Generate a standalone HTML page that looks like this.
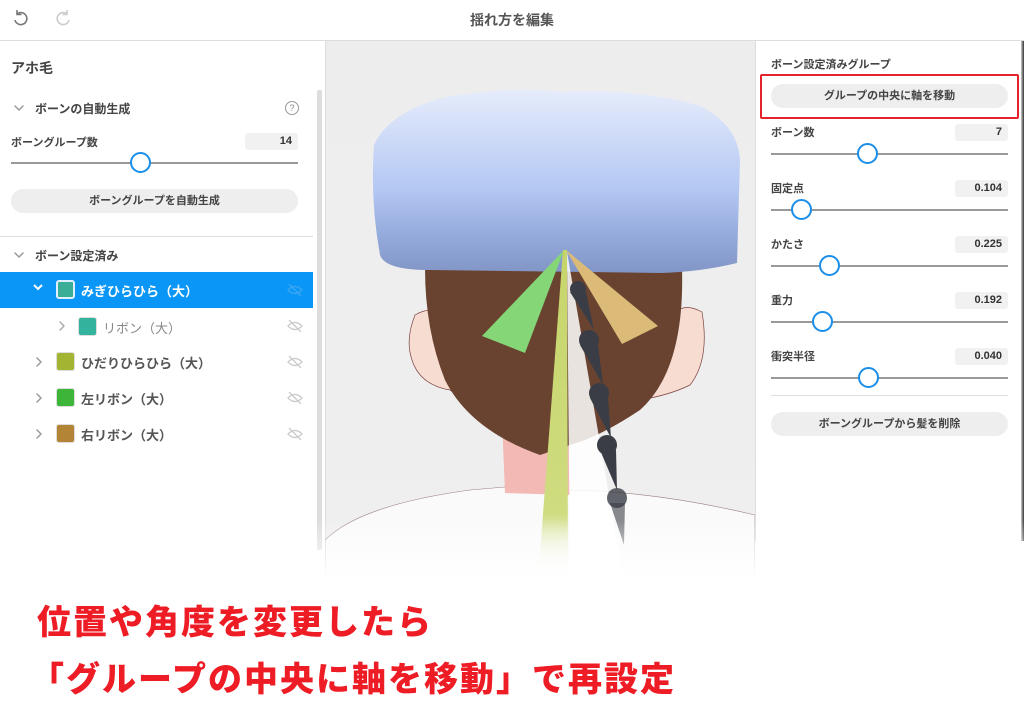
<!DOCTYPE html>
<html><head><meta charset="utf-8"><style>
*{margin:0;padding:0;box-sizing:border-box}
body{width:1024px;height:727px;overflow:hidden;background:#fff;font-family:"Liberation Sans","Noto Sans CJK JP",sans-serif;color:#333;position:relative}
.a{position:absolute}
.t{font-size:11px;font-weight:bold;color:#444;white-space:nowrap}
.val{position:absolute;background:#f1f1f1;border-radius:3px;font-size:11px;font-weight:bold;text-align:right;padding-right:6px;line-height:17px;color:#333}
.line{position:absolute;height:2px;background:#999}
.knob{position:absolute;width:21px;height:21px;border:2px solid #1a8ee8;border-radius:50%;background:#fff}
.btn{position:absolute;background:#eeeeee;border-radius:12px;font-size:11px;font-weight:bold;text-align:center;line-height:24px;color:#444}
.sw{position:absolute;width:19px;height:19px;border-radius:3px;border:1px solid #ddd}
.row{position:absolute;font-size:13px;font-weight:bold;color:#555;white-space:nowrap}
.big{position:absolute;font-size:34px;font-weight:900;color:#ee1c24;white-space:nowrap;letter-spacing:2px;font-family:"Noto Sans CJK JP",sans-serif}
</style></head><body>
<!-- header -->
<svg class="a" style="left:10px;top:8px" width="80" height="22" viewBox="0 0 80 22">
<path d="M7 6 A6 6 0 1 1 5 12" fill="none" stroke="#777" stroke-width="1.6"/><path d="M7 2 L7 6.5 L11.5 6.5" fill="none" stroke="#777" stroke-width="1.6"/>
<path d="M57 6 A6 6 0 1 0 59 12" fill="none" stroke="#ccc" stroke-width="1.6"/><path d="M57 2 L57 6.5 L52.5 6.5" fill="none" stroke="#ccc" stroke-width="1.6"/>
</svg>
<div class="a" style="left:0;width:1024px;top:10px;text-align:center;font-size:14px;font-weight:bold;color:#555">揺れ方を編集</div>
<div class="a" style="left:0;top:40px;width:1024px;height:1px;background:#ddd"></div>

<!-- viewport -->
<div class="a" style="left:325px;top:41px;width:430px;height:540px;background:linear-gradient(#ededed,#efefef)"></div>
<div class="a" style="left:325px;top:41px;width:1px;height:500px;background:#ddd"></div>
<svg class="a" style="left:325px;top:41px" width="430" height="540" viewBox="325 41 430 540">
<defs>
<linearGradient id="hat" x1="0" y1="0" x2="0" y2="1"><stop offset="0" stop-color="#e6ecfb"/><stop offset=".55" stop-color="#b3c7f3"/><stop offset=".8" stop-color="#94aadb"/><stop offset="1" stop-color="#8196c6"/></linearGradient>
<linearGradient id="yel" x1="0" y1="0" x2="0" y2="1"><stop offset="0" stop-color="#c6d56a"/><stop offset=".8" stop-color="#cfdc80"/><stop offset="1" stop-color="#fff" stop-opacity="0"/></linearGradient>
</defs>
<path d="M325 540 Q360 505 470 490 L505 487 L560 490 Q650 490 755 515 L755 580 L325 580Z" fill="#fafafa" stroke="#9a7b80" stroke-width=".6"/>
<path d="M500 370 L505 493 L570 495 L568 390Z" fill="#f2b9b5"/>
<path d="M415 315 Q440 300 465 330 L490 420 Q470 405 450 390 Q420 385 412 360 Q405 340 415 315Z" fill="#f7dcd1" stroke="#7b4040" stroke-width=".7"/>
<path d="M702 312 Q680 300 670 320 L640 400 Q670 395 690 385 Q710 360 702 312Z" fill="#f7dcd1" stroke="#7b4040" stroke-width=".7"/>
<path d="M425 268 L682 268 Q685 370 640 410 Q610 430 585 440 L540 455 Q470 430 445 380 Q425 330 425 268Z" fill="#6a4330"/>
<path d="M374 145 Q390 110 450 96 Q520 86 560 92 Q640 88 700 106 Q738 125 740 160 L737 263 Q700 272 660 273 L430 270 Q385 270 380 255 Q370 200 374 145Z" fill="url(#hat)"/>
<path d="M564 250 L482 336 L525 353Z" fill="#85d677"/>
<path d="M566 250 L658 326 L622 344Z" fill="#dcbb78"/>
<path d="M563 250 L538 580 L568 580 L567 250Z" fill="url(#yel)"/>
<path d="M567 252 L622 570 L600 580 L570 580Z" fill="#fff" opacity=".85"/>
<g fill="#3a3d45">
<circle cx="578" cy="289" r="8"/><path d="M570 292 L594 330 L586 292Z"/>
<circle cx="589" cy="340" r="10"/><path d="M580 345 L603 385 L598 345Z"/>
<circle cx="599" cy="393" r="10"/><path d="M590 398 L611 438 L608 398Z"/>
<circle cx="607" cy="445" r="10"/><path d="M600 450 L617 490 L616 450Z"/>
<circle cx="617" cy="498" r="10" opacity=".8"/><path d="M610 503 L624 545 L625 503Z" opacity=".6"/>
</g>
</svg>

<!-- left panel -->
<div class="a" style="left:11px;top:58px;font-size:14px;font-weight:bold;color:#444">アホ毛</div>
<div class="a" style="left:317px;top:90px;width:5px;height:460px;background:#ddd;border-radius:2px"></div>
<svg class="a" style="left:0;top:95px" width="80" height="350" viewBox="0 95 80 350" fill="none" stroke-width="1.5" stroke-linecap="round" stroke-linejoin="round">
<path d="M15 106 L19 110 L23 106" stroke="#999"/>
<path d="M15 253 L19 257 L23 253" stroke="#999"/>
<path d="M34 287 L38 291 L42 287" stroke="#fff" stroke-width="2"/>
<path d="M60 322 L64 326 L60 330" stroke="#aaa"/>
<path d="M37 358 L41 362 L37 366" stroke="#999"/>
<path d="M37 394 L41 398 L37 402" stroke="#999"/>
<path d="M37 430 L41 434 L37 438" stroke="#999"/>
</svg>
<div class="a t" style="left:35px;top:100px;font-size:12px">ボーンの自動生成</div>
<div class="a" style="left:285px;top:101px;width:14px;height:14px;border:1.2px solid #999;border-radius:50%;font-size:9px;text-align:center;line-height:12px;color:#888">?</div>
<div class="a t" style="left:11px;top:134px">ボーングループ数</div>
<div class="val" style="left:245px;top:133px;width:53px">14</div>
<div class="line" style="left:11px;top:162px;width:287px"></div>
<div class="knob" style="left:130px;top:152px"></div>
<div class="btn" style="left:11px;top:189px;width:287px">ボーングループを自動生成</div>
<div class="a" style="left:0;top:236px;width:313px;height:1px;background:#ddd"></div>
<div class="a t" style="left:35px;top:247px;font-size:12px">ボーン設定済み</div>
<div class="a" style="left:0;top:272px;width:313px;height:36px;background:#0a96f6"></div>
<svg class="a" style="left:30px;top:282px" width="16" height="12"><path d="M4 3 L8 7 L12 3" fill="none" stroke="#fff" stroke-width="2"/></svg>
<div class="sw" style="left:56px;top:280px;background:#3aae96;border:2px solid #e0f0ff"></div>
<div class="row" style="left:81px;top:281px;color:#fff">みぎひらひら（大）</div>
<div class="sw" style="left:78px;top:317px;background:#33b39d"></div>
<div class="row" style="left:103px;top:318px;font-weight:normal;color:#888">リボン（大）</div>
<div class="sw" style="left:56px;top:352px;background:#a3b433"></div>
<div class="row" style="left:81px;top:353px">ひだりひらひら（大）</div>
<div class="sw" style="left:56px;top:388px;background:#3cb538"></div>
<div class="row" style="left:81px;top:389px">左リボン（大）</div>
<div class="sw" style="left:56px;top:424px;background:#b38436"></div>
<div class="row" style="left:81px;top:425px">右リボン（大）</div>
<svg class="a" style="left:287px;top:282px" width="16" height="160" viewBox="0 0 16 160">
<g fill="none" stroke-width="1.3">
<g stroke="#3aa6f0"><path d="M1 8 Q8 1 15 8 Q8 15 1 8Z"/><path d="M2 2 L14 14"/></g>
<g stroke="#ccc" transform="translate(0,36)"><path d="M1 8 Q8 1 15 8 Q8 15 1 8Z"/><path d="M2 2 L14 14"/></g>
<g stroke="#ccc" transform="translate(0,72)"><path d="M1 8 Q8 1 15 8 Q8 15 1 8Z"/><path d="M2 2 L14 14"/></g>
<g stroke="#ccc" transform="translate(0,108)"><path d="M1 8 Q8 1 15 8 Q8 15 1 8Z"/><path d="M2 2 L14 14"/></g>
<g stroke="#ccc" transform="translate(0,144)"><path d="M1 8 Q8 1 15 8 Q8 15 1 8Z"/><path d="M2 2 L14 14"/></g>
</g></svg>

<!-- right panel -->
<div class="a" style="left:755px;top:41px;width:1px;height:500px;background:#ddd"></div>
<div class="a" style="left:1021px;top:41px;width:3px;height:500px;background:linear-gradient(90deg,#ccc,#333)"></div>
<div class="a t" style="left:771px;top:56px">ボーン設定済みグループ</div>
<div class="a" style="left:760px;top:74px;width:259px;height:45px;border:2px solid #e5232b;border-radius:2px"></div>
<div class="btn" style="left:771px;top:84px;width:237px">グループの中央に軸を移動</div>
<div class="a t" style="left:771px;top:124px">ボーン数</div><div class="val" style="left:955px;top:124px;width:53px">7</div>
<div class="line" style="left:771px;top:153px;width:237px"></div><div class="knob" style="left:857px;top:143px"></div>
<div class="a t" style="left:771px;top:180px">固定点</div><div class="val" style="left:955px;top:180px;width:53px">0.104</div>
<div class="line" style="left:771px;top:209px;width:237px"></div><div class="knob" style="left:791px;top:199px"></div>
<div class="a t" style="left:771px;top:236px">かたさ</div><div class="val" style="left:955px;top:236px;width:53px">0.225</div>
<div class="line" style="left:771px;top:265px;width:237px"></div><div class="knob" style="left:819px;top:255px"></div>
<div class="a t" style="left:771px;top:292px">重力</div><div class="val" style="left:955px;top:292px;width:53px">0.192</div>
<div class="line" style="left:771px;top:321px;width:237px"></div><div class="knob" style="left:812px;top:311px"></div>
<div class="a t" style="left:771px;top:348px">衝突半径</div><div class="val" style="left:955px;top:348px;width:53px">0.040</div>
<div class="line" style="left:771px;top:377px;width:237px"></div><div class="knob" style="left:858px;top:367px"></div>
<div class="a" style="left:771px;top:395px;width:237px;height:1px;background:#ddd"></div>
<div class="btn" style="left:771px;top:412px;width:237px">ボーングループから髪を削除</div>

<!-- fade -->
<div class="a" style="left:0;top:520px;width:1024px;height:70px;background:linear-gradient(rgba(255,255,255,0),#fff 85%)"></div>

<div class="big" style="left:37px;top:595px">位置や角度を変更したら</div>
<div class="big" style="left:30px;top:652px">「グループの中央に軸を移動」で再設定</div>
</body></html>
